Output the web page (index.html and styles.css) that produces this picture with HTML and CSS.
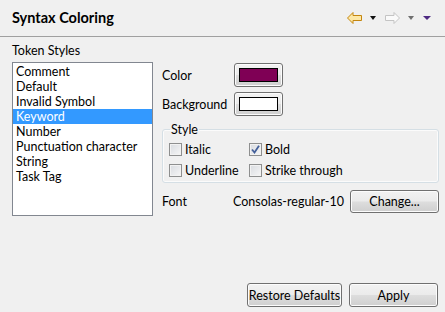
FILE: index.html
```html
<!DOCTYPE html>
<html lang="en">
<head>
    <meta charset="UTF-8">
    <title>Syntax Coloring</title>
    <link rel="stylesheet" href="styles.css">
</head>
<body>
<div class="page">

    <!-- Title bar with history arrows -->
    <header class="title-bar">
        <h1>Syntax Coloring</h1>
        <div class="nav-tools">
            <svg class="arrow" width="15" height="12" viewBox="0 0 15 12">
                <path d="M0.5 6 L6 0.5 L6 3.5 L14.5 3.5 L14.5 8.5 L6 8.5 L6 11.5 Z" fill="#fde8a6" stroke="#c4860f" stroke-width="1" stroke-linejoin="round"/>
            </svg>
            <span class="drop dark"></span>
            <svg class="arrow" width="15" height="12" viewBox="0 0 15 12">
                <path d="M14.5 6 L9 0.5 L9 3.5 L0.5 3.5 L0.5 8.5 L9 8.5 L9 11.5 Z" fill="#fafafa" stroke="#c4c4c4" stroke-width="1" stroke-linejoin="round"/>
            </svg>
            <span class="drop grey"></span>
            <span class="drop purple"></span>
        </div>
    </header>

    <div class="content">
        <div class="section-label">Token Styles</div>

        <div class="editor">
            <ul class="token-list">
                <li>Comment</li>
                <li>Default</li>
                <li>Invalid Symbol</li>
                <li class="selected">Keyword</li>
                <li>Number</li>
                <li>Punctuation character</li>
                <li>String</li>
                <li>Task Tag</li>
            </ul>

            <div class="settings">
                <div class="color-row">
                    <span class="label">Color</span>
                    <button class="color-btn"><span class="swatch keyword"></span></button>
                </div>
                <div class="color-row">
                    <span class="label">Background</span>
                    <button class="color-btn"><span class="swatch white"></span></button>
                </div>

                <fieldset class="style-group">
                    <legend>Style</legend>
                    <div class="checks">
                        <label class="check"><span class="box"></span>Italic</label>
                        <label class="check"><span class="box checked"><svg width="9" height="9" viewBox="0 0 9 9"><path d="M1 4.5 L3.5 7.5 L8 0.8" fill="none" stroke="#44609a" stroke-width="1.8"/></svg></span>Bold</label>
                        <label class="check"><span class="box"></span>Underline</label>
                        <label class="check"><span class="box"></span>Strike through</label>
                    </div>
                </fieldset>

                <div class="font-row">
                    <span class="label">Font</span>
                    <span class="font-name">Consolas-regular-10</span>
                    <button class="btn change">Change...</button>
                </div>
            </div>
        </div>
    </div>

    <footer class="actions">
        <button class="btn restore">Restore Defaults</button>
        <button class="btn apply">Apply</button>
    </footer>

</div>
</body>
</html>
```

FILE: styles.css
```css
body, html {
    margin: 0;
    padding: 0;
    background: #f0f0f0;
    font-family: Lato, "Noto Sans", sans-serif;
    font-size: 12.5px;
    color: #000;
}

.page {
    width: 445px;
    height: 312px;
    display: flex;
    flex-direction: column;
}

/* Title bar */
.title-bar {
    height: 36px;
    border-bottom: 1px solid #a0a0a0;
    display: flex;
    align-items: center;
    justify-content: space-between;
    padding: 0 14px 0 12px;
}

.title-bar h1 {
    margin: 0;
    font-size: 14.5px;
    font-weight: bold;
    margin-top: -1px;
}

.nav-tools {
    display: flex;
    align-items: center;
    margin-top: -1px;
}

.drop {
    width: 0;
    height: 0;
    border-left: 3.5px solid transparent;
    border-right: 3.5px solid transparent;
    border-top: 4px solid #111;
    margin: 0 9px 0 8px;
}

.drop.grey { border-top-color: #6f6f6f; }

.drop.purple {
    border-left-width: 4px;
    border-right-width: 4px;
    border-top-color: #4e2a82;
    margin: 0;
}

/* Main content */
.content {
    padding: 6px 0 0 12px;
}

.section-label {
    line-height: 15px;
    margin-bottom: 4px;
}

.editor {
    display: flex;
}

.token-list {
    list-style: none;
    margin: 0;
    padding: 1px 0 0 0;
    width: 139px;
    height: 151px;
    background: #fff;
    border: 1px solid #828790;
}

.token-list li {
    line-height: 15px;
    padding-left: 3px;
    white-space: nowrap;
}

.token-list li.selected {
    background: #3399ff;
    color: #fff;
}

.settings {
    margin-left: 9px;
    width: 277px;
}

.color-row {
    display: flex;
    align-items: center;
    margin-top: 1px;
    margin-bottom: 5px;
}

.color-row .label {
    width: 72px;
}

/* Buttons */
.btn, .color-btn {
    font-family: inherit;
    font-size: 12.5px;
    color: #000;
    border: 1px solid #707070;
    border-radius: 3px;
    background: linear-gradient(#f2f2f2 0%, #ebebeb 48%, #dddddd 52%, #cfcfcf 100%);
    box-shadow: inset 0 0 0 1px #fcfcfc;
    padding: 0;
    white-space: nowrap;
    cursor: default;
}

.color-btn {
    width: 49px;
    height: 24px;
    display: flex;
    align-items: center;
    justify-content: center;
}

.swatch {
    display: block;
    width: 37px;
    height: 12px;
    border: 1px solid #000;
}

.swatch.keyword { background: #7f0055; }
.swatch.white { background: #fff; }

/* Style group */
.style-group {
    margin: 6px 0 0 0;
    padding: 5px 0 4px 6px;
    border: 1px solid #d5dfe5;
    border-radius: 3px;
    box-shadow: inset 0 0 0 1px #fbfbfb;
    min-width: 0;
}

.style-group legend {
    padding: 0 1px;
    margin-left: 1px;
    line-height: 15px;
}

.checks {
    display: grid;
    grid-template-columns: 80px auto;
    row-gap: 6px;
}

.check {
    display: flex;
    align-items: center;
    line-height: 15px;
}

.box {
    width: 11px;
    height: 11px;
    border: 1px solid #8e8f8f;
    background: linear-gradient(135deg, #d8dbe0, #f6f6f6);
    box-shadow: inset 0 0 0 1px #f2f2f2;
    margin-right: 3px;
    display: flex;
    align-items: center;
    justify-content: center;
}

/* Font row */
.font-row {
    display: flex;
    align-items: center;
    margin-top: 7px;
}

.font-row .label {
    width: 71px;
}

.font-name {
    flex: 1;
}

.btn.change {
    width: 89px;
    height: 23px;
}

/* Bottom buttons */
.actions {
    margin-top: auto;
    display: flex;
    justify-content: flex-end;
    gap: 7px;
    padding: 0 7px 5px 0;
}

.btn.restore {
    width: 95px;
    height: 24px;
}

.btn.apply {
    width: 89px;
    height: 24px;
}
```
